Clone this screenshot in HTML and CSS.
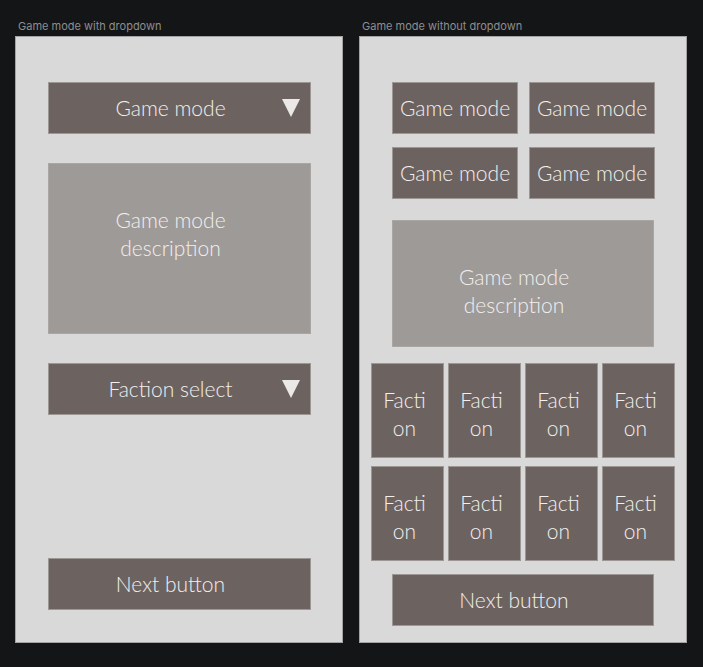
FILE: index.html
```html
<!DOCTYPE html>
<html lang="en">
<head>
  <meta charset="UTF-8">
  <meta name="viewport" content="width=device-width, initial-scale=1.0">
  <title>Game setup wireframes</title>
  <link rel="stylesheet" href="styles.css">
</head>
<body>
  <div class="board">

    <!-- Variant 1: dropdowns -->
    <section class="column">
      <div class="frame-label">Game mode with dropdown</div>
      <div class="frame frame-dropdown">
        <div class="box select">
          <span>Game mode</span>
          <span class="arrow"></span>
        </div>
        <div class="box description description-tall">Game mode<br>description</div>
        <div class="box select">
          <span>Faction select</span>
          <span class="arrow"></span>
        </div>
        <div class="box next">Next button</div>
      </div>
    </section>

    <!-- Variant 2: all options visible -->
    <section class="column">
      <div class="frame-label">Game mode without dropdown</div>
      <div class="frame frame-grid">
        <div class="mode-grid">
          <div class="box">Game mode</div>
          <div class="box">Game mode</div>
          <div class="box">Game mode</div>
          <div class="box">Game mode</div>
        </div>
        <div class="box description description-short">Game mode<br>description</div>
        <div class="faction-grid">
          <div class="box faction">Faction</div>
          <div class="box faction">Faction</div>
          <div class="box faction">Faction</div>
          <div class="box faction">Faction</div>
          <div class="box faction">Faction</div>
          <div class="box faction">Faction</div>
          <div class="box faction">Faction</div>
          <div class="box faction">Faction</div>
        </div>
        <div class="box next">Next button</div>
      </div>
    </section>

  </div>
</body>
</html>
```

FILE: styles.css
```css
body {
  margin: 0;
  background-color: #141517;
  font-family: Lato, "Open Sans", sans-serif;
}

.board {
  display: flex;
  gap: 16px;
  padding: 18px 0 0 15px;
}

.column {
  width: 328px;
}

.frame-label {
  font-family: Inter, "Liberation Sans", sans-serif;
  font-size: 11px;
  line-height: 16px;
  color: #8e8e8e;
  padding-left: 3px;
  margin-bottom: 2px;
}

.frame {
  box-sizing: border-box;
  height: 607px;
  background-color: #d9d9d9;
  border: 1px solid #a3a3a3;
  display: flex;
  flex-direction: column;
}

.box {
  box-sizing: border-box;
  background-color: #6c6361;
  border: 1px solid #9c9694;
  color: #f2efee;
  font-size: 21px;
  font-weight: 300;
  line-height: 28px;
  text-align: center;
}

/* left frame */
.frame-dropdown {
  padding: 45px 31px 32px 32px;
}

.select {
  height: 52px;
  display: flex;
  align-items: center;
  justify-content: center;
  padding-right: 18px;
  position: relative;
}

.select + .description,
.description + .select {
  margin-top: 29px;
}

.arrow {
  position: absolute;
  right: 10px;
  top: 16px;
  width: 0;
  height: 0;
  border-left: 9px solid transparent;
  border-right: 9px solid transparent;
  border-top: 18px solid #ebe9e8;
}

.description {
  background-color: #9e9a98;
  border-color: #aaa6a4;
  padding: 42px 18px 0 0;
}

.description-tall {
  height: 171px;
}

.frame-dropdown .next {
  margin-top: auto;
}

.next {
  height: 52px;
  display: flex;
  align-items: center;
  justify-content: center;
  padding-right: 18px;
}

/* right frame */
.frame-grid {
  padding: 45px 11px 0 11px;
}

.mode-grid {
  display: grid;
  grid-template-columns: 126px 126px;
  grid-auto-rows: 52px;
  column-gap: 11px;
  row-gap: 13px;
  margin: 0 21px;
}

.mode-grid .box {
  display: flex;
  align-items: center;
  justify-content: center;
  white-space: nowrap;
}

.description-short {
  height: 127px;
  margin: 21px 21px 0;
}

.faction-grid {
  display: grid;
  grid-template-columns: repeat(4, 1fr);
  grid-auto-rows: 95px;
  column-gap: 4px;
  row-gap: 8px;
  margin-top: 16px;
}

.faction {
  padding: 22px 14px 0 8px;
  word-break: break-all;
}

.frame-grid .next {
  margin: 13px 21px 0;
}
```
